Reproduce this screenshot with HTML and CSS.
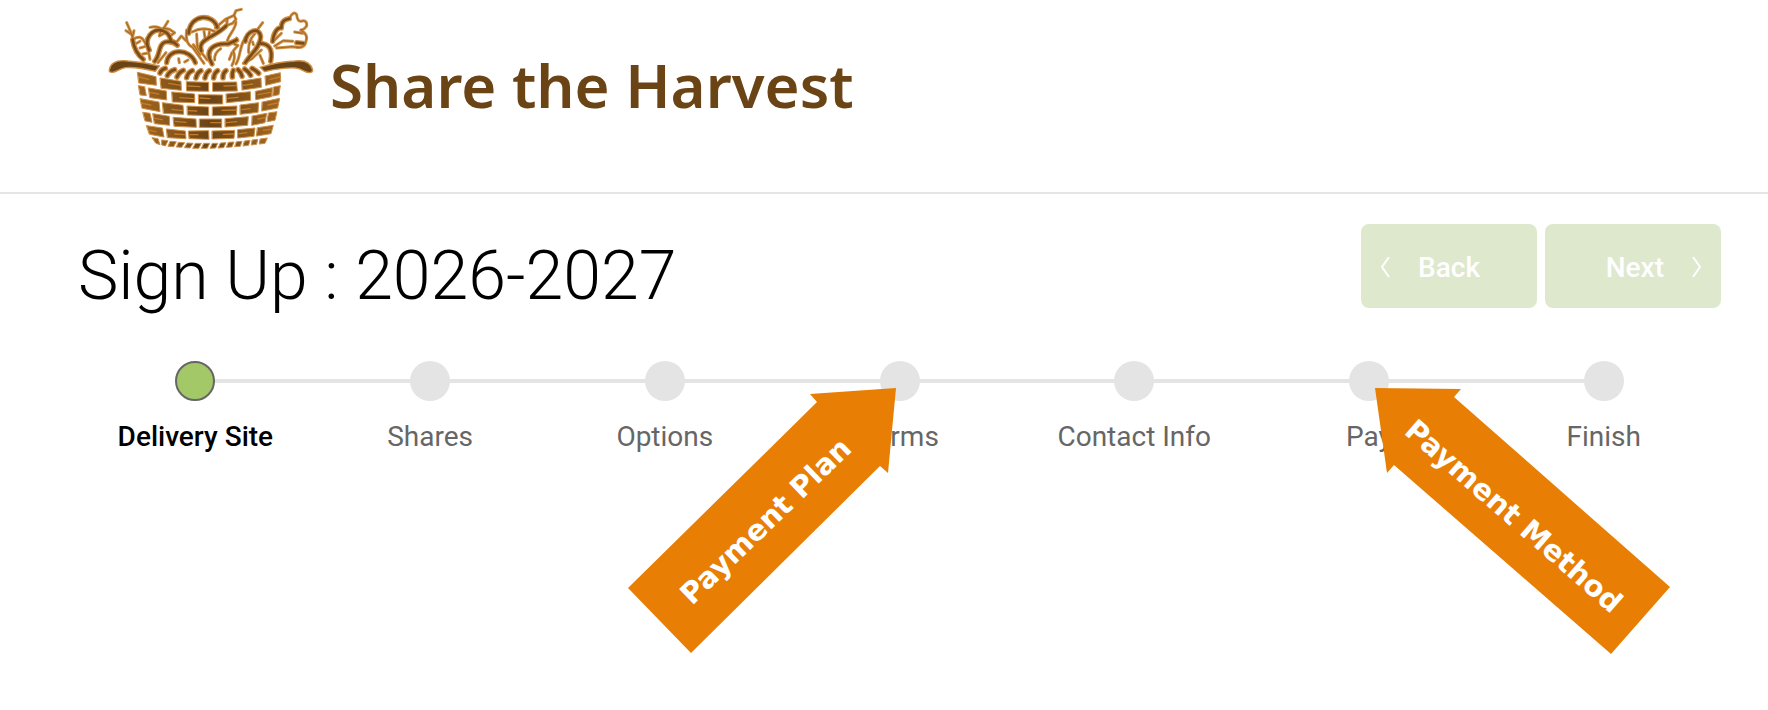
FILE: index.html
```html
<!DOCTYPE html>
<html lang="en">
<head>
  <meta charset="UTF-8">
  <meta name="viewport" content="width=device-width, initial-scale=1.0">
  <title>Share the Harvest - Sign Up</title>
  <link rel="stylesheet" href="styles.css">
</head>
<body>
  <header class="site-header">
    <svg class="logo" viewBox="0 0 660 480" aria-hidden="true">
      <defs>
        <linearGradient id="brick" x1="0" y1="0" x2="1" y2="0">
          <stop offset="0" stop-color="#a0651f"/>
          <stop offset="0.5" stop-color="#6b4416"/>
          <stop offset="1" stop-color="#a0651f"/>
        </linearGradient>
        <!-- Vegetables: heavy outlines -->
        <g id="veg-bold">
          <path d="M98 120 Q104 158 130 178"/>
          <path d="M148 150 C128 116 158 84 188 92 Q208 98 212 120"/>
          <path d="M164 184 C182 164 174 132 196 126 Q218 122 232 136"/>
          <path d="M200 188 C204 144 270 144 286 188"/>
          <path d="M266 100 C270 40 340 40 352 82"/>
          <path d="M304 152 C290 118 346 112 378 78"/>
          <path d="M336 192 C310 148 344 128 384 132 L410 120"/>
          <path d="M436 124 C440 92 478 78 482 110 C482 142 448 166 436 188"/>
          <path d="M478 130 C504 130 520 144 512 184"/>
          <path d="M518 124 C520 98 532 82 544 84 C544 60 558 58 568 56"/>
          <path d="M590 128 L610 130"/>
        </g>
        <!-- Vegetables: thin outlines, stems and leaves -->
        <g id="veg-fine">
          <path d="M80 68 L92 96 L100 118 M78 92 L96 104 M102 92 L96 118"/>
          <path d="M100 118 Q122 102 134 126 Q144 142 146 158 L150 178 M120 124 L110 130 M134 140 L120 144 M140 160 L128 162"/>
          <path d="M150 82 Q174 76 188 90 L204 64 M184 88 L178 108 L196 98 L210 108 L224 98 L208 88 L190 84"/>
          <path d="M212 118 L230 126 L244 108 L258 122 M174 188 L198 158 M236 176 L238 188 M254 186 L264 180"/>
          <path d="M260 90 Q254 132 278 142 L312 190 M276 96 Q310 78 344 94 M290 102 L292 142 L322 180 M312 94 L316 120 M328 96 L326 116 M280 134 L300 164"/>
          <path d="M346 84 L376 58 L402 46 L408 32 L424 28 M382 56 L380 76 L398 70 L408 58 L402 46 M408 66 C406 90 388 100 382 122"/>
          <path d="M410 114 L402 132 L414 136 L400 152 Q408 174 396 196 M388 178 L396 158 M344 180 Q342 158 362 146"/>
          <path d="M408 192 C424 168 416 130 446 100 M446 158 C444 132 454 112 464 102 M458 126 L460 134 M470 92 L488 68 M430 190 L456 176 L484 150 M480 166 L490 190"/>
          <path d="M518 126 L544 100 M524 138 L550 122 L578 124 M530 144 L576 140 L594 142"/>
          <path d="M568 56 Q580 30 590 44 Q592 64 602 64 Q622 58 620 78 Q612 90 602 90 Q626 104 618 124 Q614 146 590 142 M584 96 L608 100"/>
        </g>
        <g id="rope">
          <path d="M196 205 Q184 208 180 219"/>
          <path d="M224 209 Q209 213 202 227"/>
          <path d="M250 211 Q237 216 231 231"/>
          <path d="M277 212 Q264 217 260 233"/>
          <path d="M303 212 Q291 218 288 234"/>
          <path d="M328 212 Q318 218 315 234"/>
          <path d="M353 212 Q343 218 341 234"/>
          <path d="M378 212 Q369 218 369 233"/>
          <path d="M400 211 Q396 218 397 231"/>
          <path d="M414 209 Q424 218 426 229"/>
          <path d="M434 207 Q446 215 452 226"/>
          <path d="M456 205 Q468 211 476 220"/>
        </g>
      </defs>
      <use class="veg-edge" href="#veg-fine"/>
      <use class="veg-edge-bold" href="#veg-bold"/>
      <use class="veg-core" href="#veg-fine"/>
      <use class="veg-core-bold" href="#veg-bold"/>
      <use class="rope-edge" href="#rope"/>
      <use class="rope-core" href="#rope"/>
      <g class="handle">
        <path d="M28 210 C32 184 58 180 84 183 Q132 186 178 198 L166 214 Q110 200 76 203 C56 206 50 218 36 217 Q26 217 28 210 Z"/>
        <path d="M638 210 C632 184 608 180 584 183 Q532 186 480 202 L494 215 Q548 202 586 204 C608 206 614 218 628 218 Q638 218 638 210 Z"/>
      </g>
      <g class="bricks">
        <path d="M113 217L168 230L169 256L117 249Z M181 234L243 244L244 271L184 265Z M260 245L326 247L326 274L261 273Z M339 247L410 246L412 273L339 274Z M426 243L483 234L484 262L427 270Z M496 228L541 218L542 245L498 256Z"/>
        <path d="M116 257L134 260L139 287L121 285Z M146 264L199 273L200 300L150 293Z M216 276L284 282L284 308L218 306Z M296 284L368 285L368 312L297 312Z M379 282L451 275L452 301L380 308Z M467 274L517 263L515 290L468 299Z M521 261L541 257L537 284L519 288Z"/>
        <path d="M121 296L177 306L180 335L127 325Z M188 308L249 316L251 343L191 340Z M262 318L326 321L326 347L263 345Z M338 321L411 318L409 345L338 347Z M421 315L476 308L474 337L421 343Z M487 306L539 295L533 324L486 333Z"/>
        <path d="M129 337L150 340L156 367L136 363Z M159 341L208 349L209 376L164 371Z M220 352L288 357L289 382L223 379Z M299 357L365 357L365 383L299 382Z M376 356L445 350L443 376L376 381Z M457 348L500 340L495 368L456 376Z M506 339L531 335L525 361L502 365Z"/>
        <path d="M140 377L187 384L192 411L149 403Z M200 387L256 393L258 416L203 413Z M266 393L326 392L327 418L268 416Z M337 393L404 391L402 415L337 417Z M414 389L465 384L462 409L414 414Z M473 383L520 376L513 401L470 408Z"/>
        <path d="M157 413L174 416L180 434L168 430Z M186 420L204 422L196 438L186 435Z M211 424L229 425L221 440L205 439Z M236 427L254 428L245 442L230 441Z M262 429L279 430L270 444L254 443Z M287 430L304 430L296 445L279 445Z M312 430L329 430L322 445L305 445Z M338 430L353 430L347 444L331 445Z M362 429L378 428L371 443L355 444Z M386 427L402 426L396 441L380 442Z M410 425L426 424L421 439L405 440Z M434 423L450 421L446 436L430 438Z M457 420L473 418L470 433L455 435Z M481 417L502 414L495 430L479 432Z"/>
      </g>
      <!-- Highlights in the weave -->
      <g class="grain">
        <path d="M118 231L146 238 M206 250L242 256 M264 258L300 260 M372 258L408 257 M430 256L458 252 M510 238L540 231"/>
        <path d="M152 278L176 282 M240 293L282 296 M300 294L330 296 M384 295L414 292 M474 284L512 277"/>
        <path d="M126 310L152 315 M216 328L248 332 M266 332L290 333 M366 331L406 330 M426 329L450 326 M504 315L532 309"/>
        <path d="M164 355L186 359 M226 364L258 367 M332 368L362 368 M380 368L410 365 M474 357L496 353"/>
        <path d="M148 391L168 395 M224 402L254 404 M270 404L294 404 M370 403L400 402 M418 401L440 398 M490 391L512 388"/>
      </g>
    </svg>
    <span class="site-name">Share the Harvest</span>
  </header>

  <main class="signup">
    <div class="title-row">
      <h1>Sign Up : 2026-2027</h1>
      <div class="nav-buttons">
        <button type="button" class="nav-button">
          <svg class="chevron" viewBox="0 0 10 20" aria-hidden="true"><path d="M9 0 L2 10 L9 20"/></svg>
          <span>Back</span>
        </button>
        <button type="button" class="nav-button next">
          <span>Next</span>
          <svg class="chevron" viewBox="0 0 10 20" aria-hidden="true"><path d="M1 0 L8 10 L1 20"/></svg>
        </button>
      </div>
    </div>

    <ol class="steps">
      <li class="step active" aria-current="step"><span class="dot"></span><span class="label">Delivery Site</span></li>
      <li class="step"><span class="dot"></span><span class="label">Shares</span></li>
      <li class="step"><span class="dot"></span><span class="label">Options</span></li>
      <li class="step">
        <span class="dot"></span><span class="label">Terms</span>
        <svg class="callout callout-left" viewBox="0 0 272 268">
          <polygon points="268,0 182,6 189,14 0,200 63,265 252,78 260,85"/>
          <text transform="translate(64 218) rotate(-44)">Payment Plan</text>
        </svg>
      </li>
      <li class="step"><span class="dot"></span><span class="label">Contact Info</span></li>
      <li class="step">
        <span class="dot"></span><span class="label">Pay</span>
        <svg class="callout callout-right" viewBox="0 0 304 268">
          <polygon points="6,0 92,1 85,9 301,199 242,266 25,77 18,85"/>
          <text transform="translate(34 45) rotate(41)">Payment Method</text>
        </svg>
      </li>
      <li class="step"><span class="dot"></span><span class="label">Finish</span></li>
    </ol>
  </main>
</body>
</html>
```
FILE: styles.css
```css
:root {
  --brown: #6b4416;
  --gold: #cf8f45;
  --green: #a3c868;
  --button-bg: #dee8cd;
  --line-color: #e4e4e4;
  --label-color: #666666;
  --callout-bg: #e87e04;
}

* {
  box-sizing: border-box;
}

body {
  min-height: 100vh;
  margin: 0;
  background-color: #ffffff;
  color: #000000;
  font-family: Roboto, Arial, sans-serif;
}

/* Header */
.site-header {
  display: flex;
  align-items: flex-start;
  gap: 10px;
  padding: 0 100px 32px;
  border-bottom: 2px solid #e5e5e5;
}

.logo {
  width: 220px;
  height: 160px;
  flex-shrink: 0;
}

.site-name {
  margin-top: 45px;
  color: var(--brown);
  font-family: "Noto Sans", "Open Sans", sans-serif;
  font-size: 60px;
  font-weight: 600;
  line-height: 80px;
}

.logo path {
  stroke-linejoin: round;
  stroke-linecap: round;
}

.veg-edge,
.veg-edge-bold,
.rope-edge {
  fill: none;
  stroke: var(--gold);
  stroke-width: 9px;
}

.veg-edge-bold {
  stroke-width: 16px;
}

.veg-core,
.veg-core-bold,
.rope-core {
  fill: none;
  stroke: #a0651f;
  stroke-width: 3px;
}

.veg-core-bold {
  stroke: #7a4c18;
  stroke-width: 8px;
}

.rope-edge {
  stroke-width: 17px;
}

.rope-core {
  stroke: #7a4c18;
  stroke-width: 9px;
}

.handle path {
  fill: var(--brown);
  stroke: var(--gold);
  stroke-width: 4px;
}

.bricks path {
  fill: url(#brick);
  stroke: var(--gold);
  stroke-width: 3px;
}

.grain path {
  fill: none;
  stroke: #c27c2c;
  stroke-width: 4px;
}

/* Title and navigation */
.signup {
  padding: 30px 47px 0 78px;
}

.title-row {
  display: flex;
  justify-content: space-between;
  align-items: flex-start;
}

h1 {
  margin: 12px 0 0;
  font-size: 68px;
  font-weight: 300;
  line-height: 80px;
}

.nav-buttons {
  display: flex;
  gap: 8px;
}

.nav-button {
  display: flex;
  align-items: center;
  gap: 28px;
  width: 176px;
  height: 84px;
  padding: 2px 19px 0;
  border: 0;
  border-radius: 8px;
  background-color: var(--button-bg);
  color: #ffffff;
  font-family: inherit;
  font-size: 28px;
  font-weight: 500;
}

.nav-button.next {
  justify-content: flex-end;
}

.chevron {
  width: 10px;
  height: 20px;
  fill: none;
  stroke: #ffffff;
  stroke-width: 2px;
}

/* Progress steps */
.steps {
  display: flex;
  margin: 45px 0 0;
  padding: 0;
  list-style: none;
}

.step {
  position: relative;
  display: flex;
  flex: 1;
  flex-direction: column;
  align-items: center;
  gap: 19px;
}

/* Line running on to the next dot */
.step:not(:last-child)::after {
  content: "";
  position: absolute;
  top: 18px;
  left: 50%;
  width: 100%;
  height: 4px;
  background-color: var(--line-color);
}

.dot {
  position: relative;
  z-index: 1;
  width: 40px;
  height: 40px;
  border-radius: 50%;
  background-color: var(--line-color);
}

.step.active .dot {
  border: 2px solid var(--label-color);
  background-color: var(--green);
}

.label {
  color: var(--label-color);
  font-size: 28px;
  line-height: 34px;
  white-space: nowrap;
}

.step.active .label {
  color: #000000;
  font-weight: 500;
}

/* Arrow callouts laid over the steps */
.callout {
  position: absolute;
  z-index: 2;
  top: 27px;
  height: 268px;
}

.callout-left {
  right: 50%;
  width: 272px;
}

.callout-right {
  left: 50%;
  width: 304px;
}

.callout polygon {
  fill: var(--callout-bg);
}

.callout text {
  fill: #ffffff;
  font-family: "DejaVu Sans", Verdana, sans-serif;
  font-size: 29px;
  font-weight: bold;
}
```
